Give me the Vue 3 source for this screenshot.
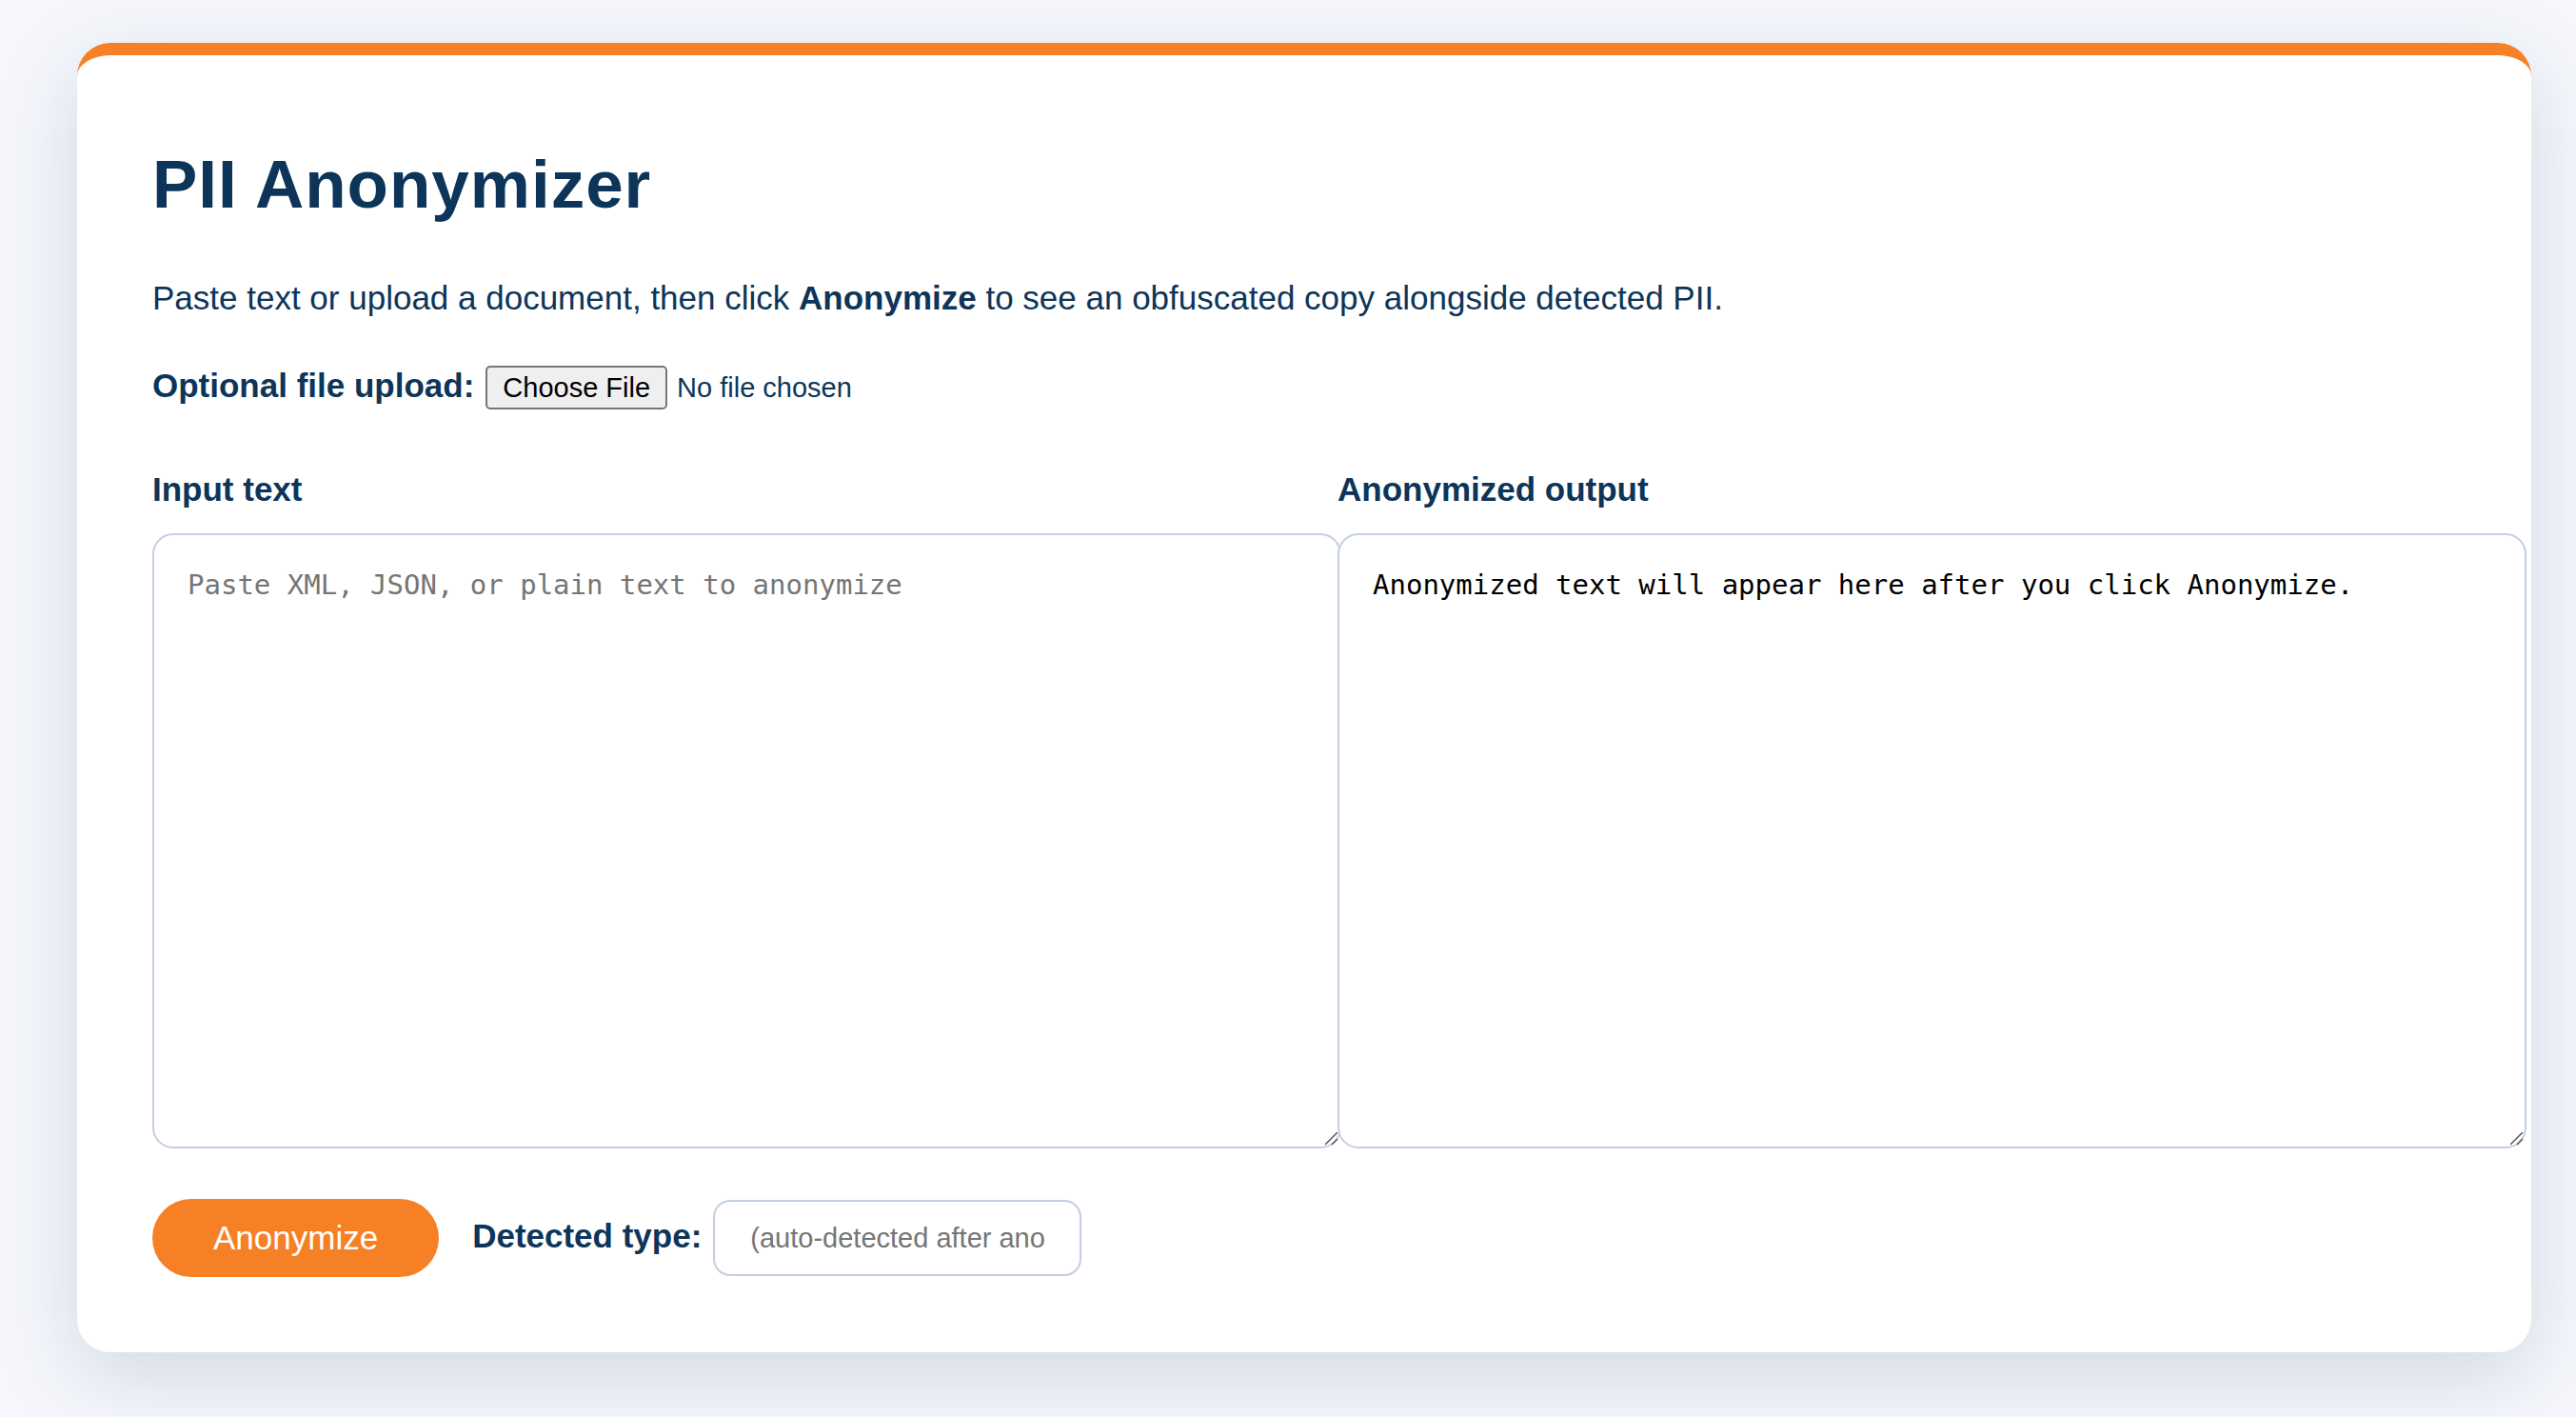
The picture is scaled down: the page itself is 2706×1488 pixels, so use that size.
<script setup>
import { ref } from 'vue'

const source = ref('')
const output = ref('Anonymized text will appear here after you click Anonymize.')
const detectedType = ref('')

function anonymize() {
  const text = source.value.trim()
  if (!text) return
  detectedType.value = text.startsWith('<') ? 'XML' : /^[[{]/.test(text) ? 'JSON' : 'Plain text'
  output.value = text
    .replace(/[\w.+-]+@[\w-]+\.[\w.]+/g, '[EMAIL]')
    .replace(/\+?\d[\d\s()-]{7,}\d/g, '[PHONE]')
}

async function loadFile(event) {
  const file = event.target.files[0]
  if (file) source.value = await file.text()
}
</script>

<template>
  <main class="card">
    <h1>PII Anonymizer</h1>
    <p>
      Paste text or upload a document, then click <strong>Anonymize</strong> to see an obfuscated
      copy alongside detected PII.
    </p>
    <form @submit.prevent="anonymize">
      <div class="upload">
        <label for="file">Optional file upload:</label>
        <input id="file" type="file" @change="loadFile" />
      </div>
      <div class="columns">
        <div class="column">
          <label for="source">Input text</label>
          <textarea
            id="source"
            v-model="source"
            placeholder="Paste XML, JSON, or plain text to anonymize"
            spellcheck="false"
          ></textarea>
        </div>
        <div class="column">
          <label for="output">Anonymized output</label>
          <textarea id="output" :value="output" readonly spellcheck="false"></textarea>
        </div>
      </div>
      <div class="actions">
        <button type="submit">Anonymize</button>
        <div class="detected">
          <label for="type">Detected type:</label>
          <input
            id="type"
            type="text"
            :value="detectedType"
            placeholder="(auto-detected after anonymize)"
            readonly
          />
        </div>
      </div>
    </form>
  </main>
</template>

<style>
body {
  background: #f5f7fc;
}
</style>

<style scoped>
.card {
  margin: 45px 47px 67px 81px;
  padding: 79px;
  border-top: 13px solid #f68026;
  border-radius: 35px;
  background: #fff;
  box-shadow: 0 26px 88px rgba(13, 53, 89, 0.15);
  color: #0d3559;
  font-family: 'Liberation Sans', Arial, sans-serif;
  font-size: 35px;
  line-height: 56px;
}

h1 {
  margin: 0 0 35px;
  font-size: 71px;
  line-height: 113px;
  letter-spacing: 1px;
}

p {
  margin: 0 0 36px;
}

label {
  font-weight: bold;
}

input,
textarea {
  font-family: inherit;
  font-size: 29px;
}

.upload,
.detected {
  display: flex;
  align-items: baseline;
  gap: 12px;
}

.upload {
  margin-bottom: 53px;
}

.upload input {
  color: inherit;
  line-height: 38px;
}

.upload input::file-selector-button {
  margin: 0 10px 0 0;
  padding: 2px 16px;
  border: 2px solid #767676;
  border-radius: 5px;
  background: #efefef;
  color: #000;
  font: inherit;
}

.columns {
  display: grid;
  grid-template-columns: 1fr 1fr;
  gap: 70px;
}

.column label {
  display: block;
  margin-bottom: 18px;
}

.column textarea {
  display: block;
  width: 100%;
  height: 572px;
  font-family: 'DejaVu Sans Mono', monospace;
  line-height: 34px;
  border-radius: 22px;
}

.column textarea::-webkit-resizer {
  background: url("data:image/svg+xml,%3Csvg xmlns='http://www.w3.org/2000/svg' width='15' height='15'%3E%3Cpath d='M0 13L13 0M7 13L13 7' stroke='%23555' stroke-width='1.5'/%3E%3C/svg%3E")
    no-repeat;
}

.column textarea,
.detected input {
  padding: 35px;
  border: 2px solid #c2cfe0;
  background: #fff;
}

.detected input {
  width: 309px;
  padding: 20px 37px;
  border-radius: 18px;
  line-height: 36px;
}

::placeholder {
  color: #757575;
  opacity: 1;
}

.actions {
  display: flex;
  align-items: center;
  gap: 35px;
  margin-top: 53px;
}

button {
  padding: 21px 64px;
  border: 0;
  border-radius: 999px;
  background: #f68026;
  color: #fff;
  font-family: inherit;
  font-size: 35px;
  line-height: 40px;
  cursor: pointer;
}
</style>
